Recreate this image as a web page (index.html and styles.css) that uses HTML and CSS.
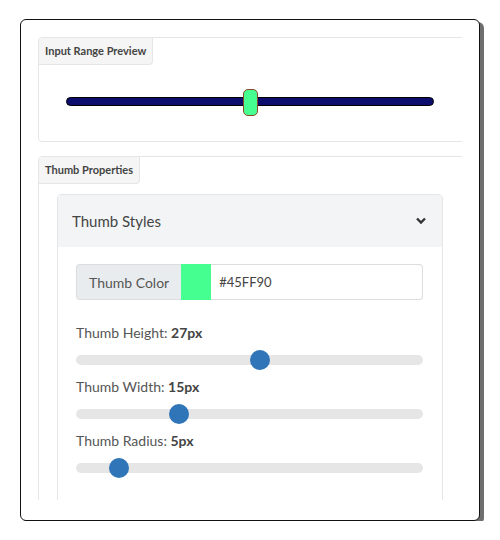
FILE: index.html
```html
<!DOCTYPE html>
<html lang="en">
<head>
  <meta charset="UTF-8" />
  <meta name="viewport" content="width=device-width, initial-scale=1.0"/>
  <title>Range Styler</title>
  <link rel="stylesheet" href="styles.css">
</head>
<body>
  <div class="frame">
    <div class="scroller">
      <div class="panel">
        <div class="panel-tab">Input Range Preview</div>
        <div class="preview">
          <input type="range" class="preview-range" min="0" max="100" value="50"/>
        </div>
      </div>

      <div class="panel">
        <div class="panel-tab">Thumb Properties</div>
        <div class="accordion">
          <div class="accordion-head">
            <span>Thumb Styles</span>
            <svg class="chevron" width="12" height="8" viewBox="0 0 12 8">
              <path d="M2 1.5 L6 5.5 L10 1.5" fill="none" stroke="#333" stroke-width="2.4"/>
            </svg>
          </div>
          <div class="accordion-body">
            <div class="color-group">
              <span class="color-label">Thumb Color</span>
              <span class="color-swatch"></span>
              <input type="text" class="color-text" value="#45FF90"/>
            </div>

            <label class="field-label">Thumb Height: <strong>27px</strong></label>
            <input type="range" class="prop-range" min="1" max="50" value="27"/>

            <label class="field-label">Thumb Width: <strong>15px</strong></label>
            <input type="range" class="prop-range" min="1" max="50" value="15"/>

            <label class="field-label">Thumb Radius: <strong>5px</strong></label>
            <input type="range" class="prop-range" min="0" max="50" value="5"/>
          </div>
        </div>
      </div>
    </div>
  </div>
</body>
</html>
```

FILE: styles.css
```css
:root {
  --border-light: #e6e6e6;
  --tab-bg: #f5f5f5;
  --head-bg: #f2f4f6;
  --text-color: #555;
  --thumb-blue: #2f75b8;
  --track-grey: #e6e6e6;
  --preview-green: #45ff90;
}

body {
  margin: 0;
  background: white;
  font-family: 'Lato', 'Open Sans', sans-serif;
  color: var(--text-color);
}

.frame {
  margin: 19px 0 0 20px;
  width: 458px;
  height: 500px;
  border: 1.5px solid #111;
  border-radius: 6px;
  box-shadow: 4px 3px 0 #6e6e6e;
  background: white;
  overflow: hidden;
}

.scroller {
  width: 424px;
  height: 463px;
  margin: 17px 0 0 17px;
  overflow: hidden;
}

.panel {
  border: 1px solid var(--border-light);
  border-radius: 4px;
  margin-bottom: 14px;
  width: 440px;
}

.panel-tab {
  display: inline-block;
  padding: 6px 6px 7px 6px;
  font-size: 11px;
  font-weight: bold;
  color: #444;
  background: var(--tab-bg);
  border-right: 1px solid var(--border-light);
  border-bottom: 1px solid var(--border-light);
  border-radius: 4px 0 4px 0;
}

.preview {
  padding: 23px 27px 26px 27px;
}

.preview-range {
  -webkit-appearance: none;
  appearance: none;
  display: block;
  width: 368px;
  height: 27px;
  margin: 0;
  background: transparent;
}

.preview-range::-webkit-slider-runnable-track {
  height: 9px;
  background: #0d0d6e;
  border: 1px solid #000;
  border-radius: 6px;
}

.preview-range::-webkit-slider-thumb {
  -webkit-appearance: none;
  width: 15px;
  height: 27px;
  margin-top: -9px;
  background: var(--preview-green);
  border: 1px solid #8a4b2a;
  border-radius: 5px;
  box-sizing: border-box;
}

.accordion {
  margin: 10px 0 0 18px;
  width: 384px;
  border: 1px solid var(--border-light);
  border-radius: 4px 4px 0 0;
}

.accordion-head {
  display: flex;
  align-items: center;
  justify-content: space-between;
  height: 52px;
  padding: 0 15px 0 14px;
  background: var(--head-bg);
  font-size: 15px;
  color: #444;
}

.chevron {
  display: block;
}

.accordion-body {
  padding: 17px 19px 40px 18px;
}

.color-group {
  display: flex;
  height: 36px;
  margin-bottom: 23px;
}

.color-label {
  display: flex;
  align-items: center;
  padding: 0 12px;
  white-space: nowrap;
  background: #e9ecef;
  border: 1px solid #ddd;
  border-right: none;
  border-radius: 4px 0 0 4px;
  font-size: 14px;
}

.color-swatch {
  width: 30px;
  flex-shrink: 0;
  background: var(--preview-green);
}

.color-text {
  flex: 1;
  min-width: 0;
  border: 1px solid #ddd;
  border-left: none;
  border-radius: 0 4px 4px 0;
  padding: 0 8px;
  font-family: inherit;
  font-size: 13px;
  color: #444;
}

.field-label {
  display: block;
  font-size: 14px;
  line-height: 20px;
  margin-bottom: 7px;
}

.field-label strong {
  color: #444;
}

.prop-range {
  -webkit-appearance: none;
  appearance: none;
  display: block;
  width: 100%;
  height: 20px;
  margin: 0 0 7px 0;
  background: transparent;
}

.prop-range::-webkit-slider-runnable-track {
  height: 10px;
  background: var(--track-grey);
  border-radius: 5px;
}

.prop-range::-webkit-slider-thumb {
  -webkit-appearance: none;
  width: 20px;
  height: 20px;
  margin-top: -5px;
  background: var(--thumb-blue);
  border-radius: 50%;
}
```
